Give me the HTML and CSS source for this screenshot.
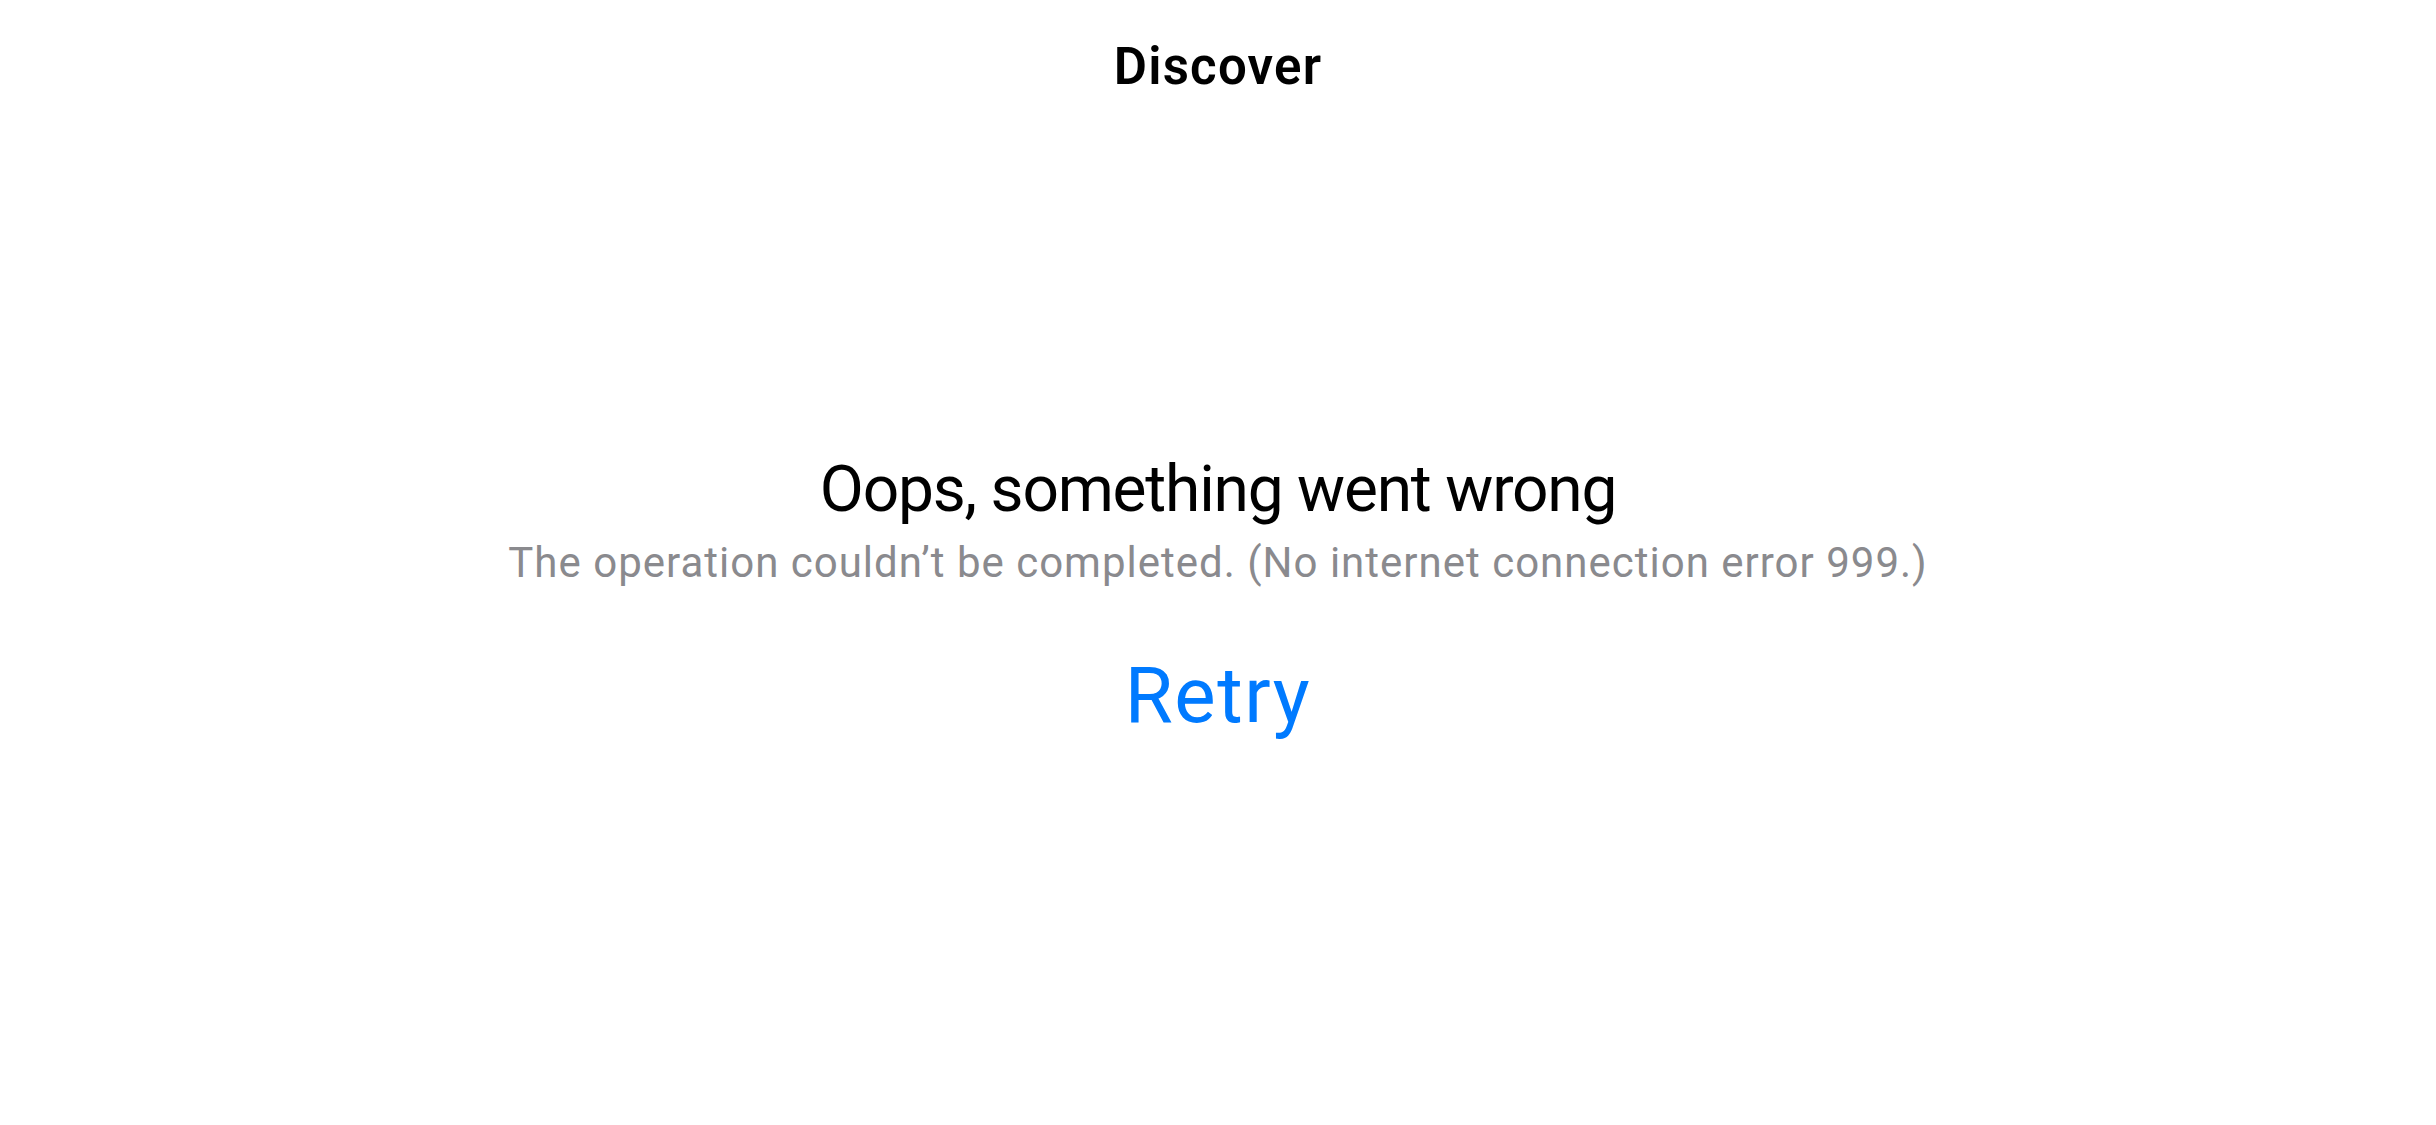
FILE: index.html
```html
<!DOCTYPE html>
<html lang="en">
<head>
<meta charset="utf-8">
<title>Discover</title>
<link rel="stylesheet" href="styles.css">
</head>
<body>
<div class="screen">
  <header class="navbar">
    <h1 class="nav-title">Discover</h1>
  </header>
  <main class="error-state">
    <h2 class="error-title">Oops, something went wrong</h2>
    <p class="error-message">The operation couldn’t be completed. (No internet connection error 999.)</p>
    <button class="retry-button" type="button">Retry</button>
  </main>
</div>
</body>
</html>
```
FILE: styles.css
```css
html, body {
  margin: 0;
  padding: 0;
  background: #ffffff;
}
body {
  font-family: Roboto, "Noto Sans", "Liberation Sans", sans-serif;
  color: #000000;
}
.screen {
  width: 2436px;
  height: 1125px;
  display: flex;
  flex-direction: column;
  overflow: hidden;
}
.navbar {
  padding-top: 37px;
  display: flex;
  justify-content: center;
}
.nav-title {
  margin: 0;
  font-size: 51px;
  line-height: 60px;
  font-weight: 600;
  letter-spacing: 1.2px;
}
.error-state {
  display: flex;
  flex-direction: column;
  align-items: center;
  padding-top: 354px;
}
.error-title {
  margin: 0;
  font-size: 64px;
  line-height: 78px;
  font-weight: 400;
  letter-spacing: -1.2px;
}
.error-message {
  margin: 9px 0 0;
  font-size: 42px;
  line-height: 50px;
  color: #8a8a8e;
  letter-spacing: 1px;
}
.retry-button {
  margin-top: 61px;
  padding: 0;
  border: 0;
  background: none;
  font-family: inherit;
  font-size: 78px;
  line-height: 94px;
  color: #007aff;
  letter-spacing: 1.5px;
  cursor: pointer;
}
```
